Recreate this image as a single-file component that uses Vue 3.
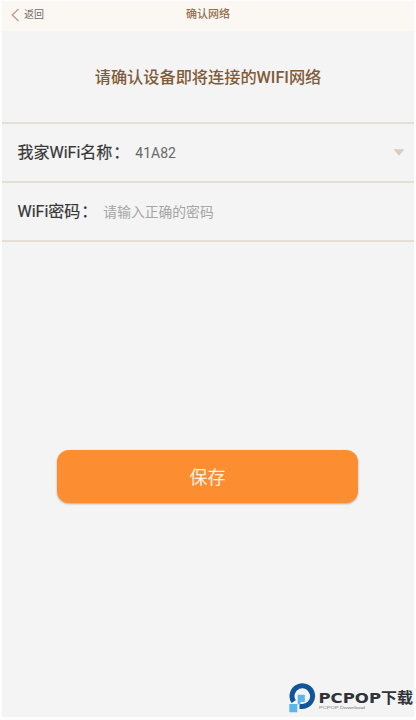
<script setup>
import { ref } from 'vue'

const network = ref('41A82')
const password = ref('')
</script>

<template>
  <div class="screen" lang="zh-CN">
    <header class="bar">
      <button class="back" type="button">
        <svg class="chevron" viewBox="0 0 9 14"><path d="M7.5 1 L1.3 7 L7.5 13" /></svg>
        <span>返回</span>
      </button>
      <h1>确认网络</h1>
    </header>
    <main>
      <h2>请确认设备即将连接的WIFI网络</h2>
      <div class="row">
        <span class="label">我家WiFi名称<span class="colon">：</span></span>
        <span class="value">{{ network }}</span>
        <svg class="caret" viewBox="0 0 12 7"><path d="M0.5 0.3 H11.5 L6 6.8 Z" /></svg>
      </div>
      <label class="row last">
        <span class="label">WiFi密码<span class="colon">：</span></span>
        <input v-model="password" type="text" placeholder="请输入正确的密码" />
      </label>
      <button class="save" type="button">保存</button>
    </main>
    <svg class="brand" viewBox="0 0 128 36">
      <path class="ring" d="M5.6 18.6 A10.3 10.3 0 1 1 14.5 23.4 H11.5" />
      <path class="light" d="M9.7 11.7 H16.8 V19 H12.5 V21.2 H9.3 V29.3 H1.3 V21 H9.7 Z" />
      <text class="name" x="30.5" y="20" textLength="62.5" lengthAdjust="spacingAndGlyphs">PCPOP</text>
      <text class="cn" x="93" y="20.3" textLength="32" lengthAdjust="spacingAndGlyphs">下载</text>
      <text class="sub" x="31" y="26.4" textLength="46" lengthAdjust="spacingAndGlyphs">PCPOP Download</text>
    </svg>
  </div>
</template>

<style>
body {
  background: #fff;
}
</style>

<style scoped>
.screen {
  position: relative;
  box-sizing: border-box;
  width: 416px;
  height: 720px;
  padding: 1px 2px 3px;
  display: flex;
  flex-direction: column;
  overflow: hidden;
  background: #fdfdfd;
  font-family: Roboto, "Noto Sans CJK SC", sans-serif;
}
.bar {
  flex: 0 0 30px;
  display: grid;
  grid-template-columns: 1fr auto 1fr;
  align-items: center;
  background: #fbf8f4;
}
button {
  border: 0;
  padding: 0;
  font-family: inherit;
}
.back {
  display: flex;
  align-items: center;
  gap: 4px;
  padding: 0 0 3px 9px;
  background: none;
  color: #6e6a68;
  font-size: 10px;
  line-height: 14px;
}
.chevron {
  width: 9px;
  height: 14px;
  fill: none;
  stroke: #c09c82;
  stroke-width: 1.3;
}
h1 {
  margin: 0;
  padding-bottom: 2px;
  color: #93704f;
  font-size: 11px;
  font-weight: 500;
  line-height: 16px;
}
main {
  flex: 1;
  display: flex;
  flex-direction: column;
  background: #f4f4f4;
}
h2 {
  box-sizing: border-box;
  margin: 0;
  height: 91px;
  padding-top: 1px;
  color: #805b39;
  font-size: 16.2px;
  font-weight: 500;
  line-height: 92px;
  text-align: center;
}
.row {
  box-sizing: border-box;
  height: 59px;
  display: flex;
  align-items: center;
  padding: 0 9px 0 15.5px;
  border-top: 2px solid #e5dfd4;
}
.last {
  height: 61px;
  border-bottom: 2px solid #e5dfd4;
}
.label {
  padding-bottom: 3px;
  color: #363636;
  font-size: 16px;
  white-space: nowrap;
  -webkit-text-stroke: 0.2px #363636;
}
.colon {
  margin: 0 -1px 0 1px;
}
.value {
  flex: 1;
  margin-left: 7px;
  color: #686868;
  font-size: 14px;
}
.caret {
  width: 12px;
  height: 7px;
  fill: #d6cfbf;
}
input {
  flex: 1;
  min-width: 0;
  margin-left: 7px;
  padding: 0;
  border: 0;
  outline: 0;
  background: none;
  font-family: inherit;
  font-size: 13.8px;
}
input::placeholder {
  color: #a5a5a5;
}
.save {
  align-self: center;
  width: 301px;
  height: 53px;
  margin-top: 208px;
  margin-right: 1px;
  padding-bottom: 2px;
  border-radius: 12px;
  background: #fc8d31;
  box-shadow: 0 1px 2px #9b9b9bcc;
  color: #fff3e6;
  font-size: 18px;
}
.brand {
  position: absolute;
  left: 288px;
  top: 683px;
  width: 128px;
  height: 36px;
}
.ring {
  fill: none;
  stroke: #11549a;
  stroke-width: 5;
}
.light {
  fill: #5cb6ee;
}
.name {
  font: 700 14px "DejaVu Sans", sans-serif;
  fill: #303338;
}
.cn {
  font: 700 15px "Noto Sans CJK SC", sans-serif;
  fill: #303338;
}
.sub {
  font: 4.4px "Liberation Sans", sans-serif;
  fill: #777;
}
</style>
